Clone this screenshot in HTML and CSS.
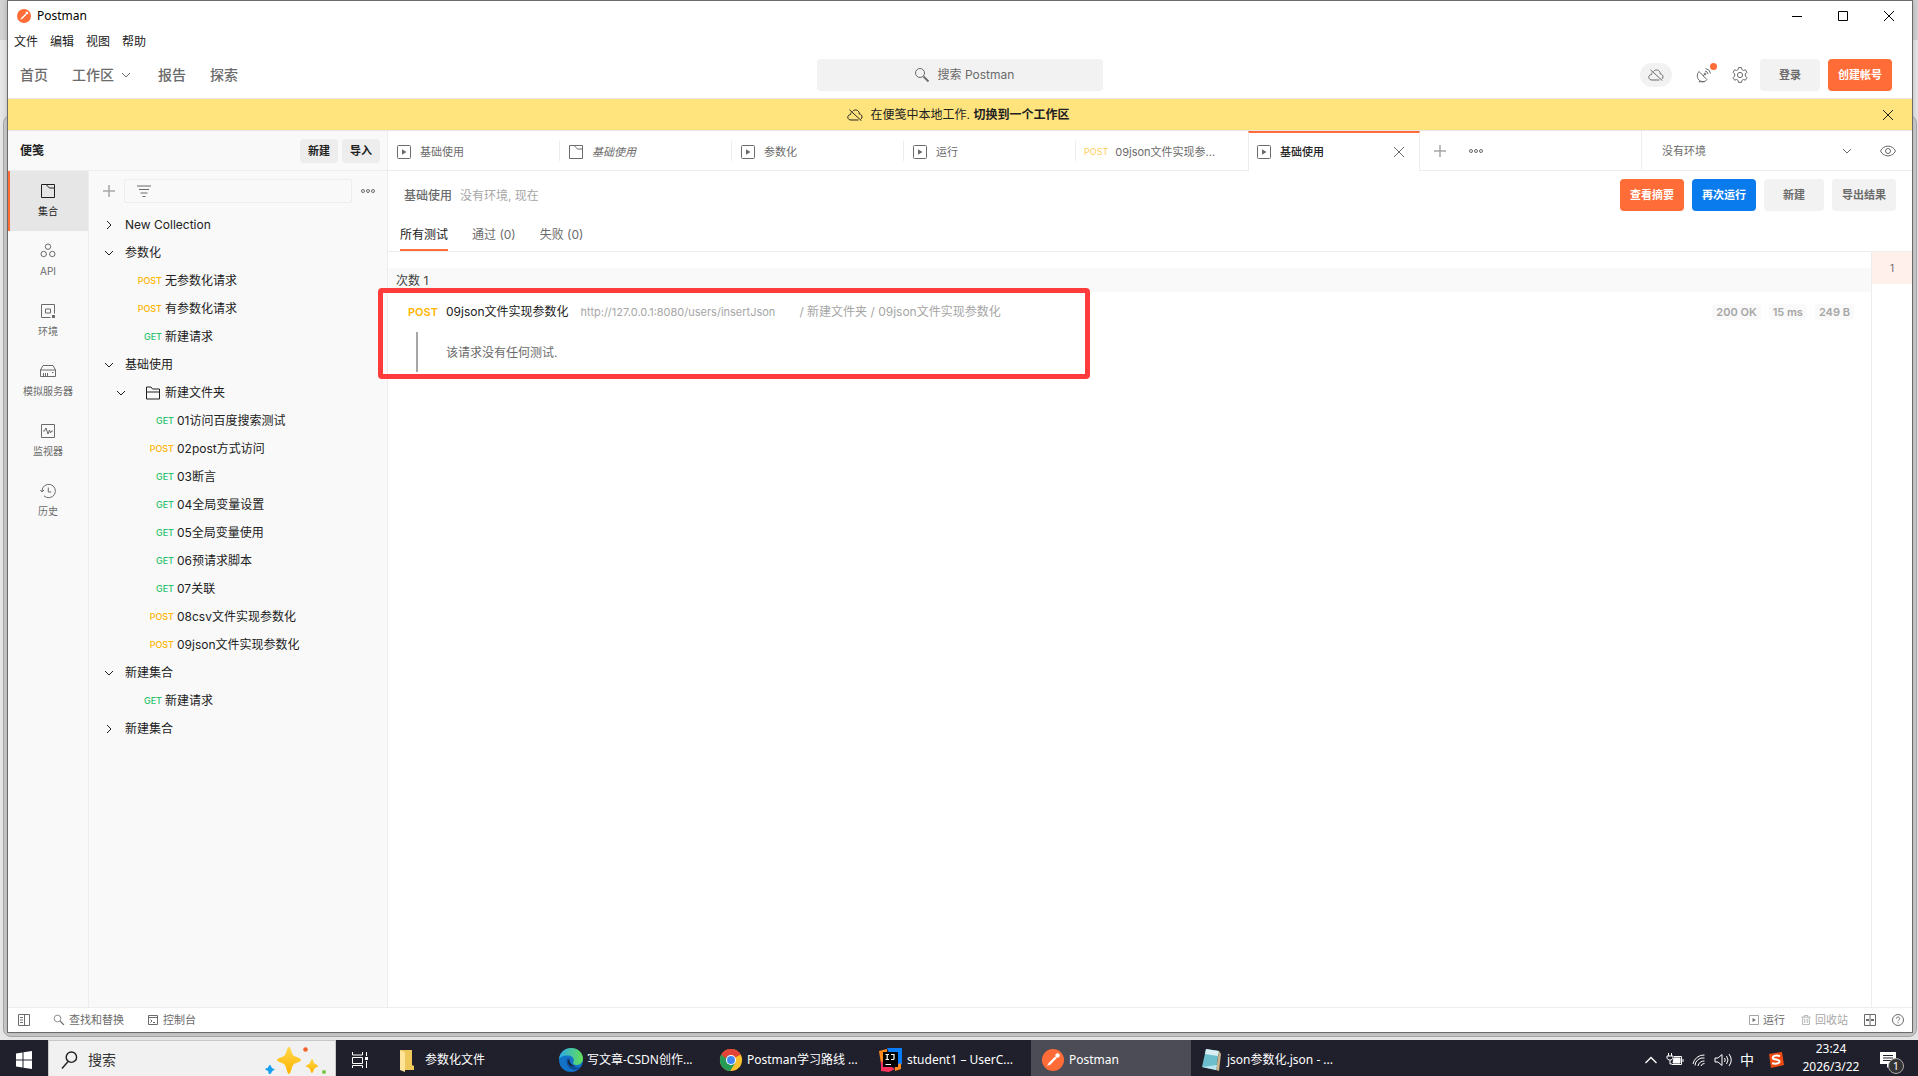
FILE: index.html
```html
<!DOCTYPE html>
<html lang="zh-CN">
<head>
<meta charset="utf-8">
<title>Postman</title>
<link rel="stylesheet" href="styles.css">
</head>
<body>
<svg class="sprite" aria-hidden="true">
  <symbol id="i-logo" viewBox="0 0 16 16"><circle cx="8" cy="8" r="8" fill="#ff6c37"/><path d="M3.600 12.400 5 10l4.600-4.600 1.200 1.200L6.200 11.200Z" fill="#fff"/><circle cx="11.300" cy="4.700" r="1.600" fill="#fff"/></symbol>
  <symbol id="i-down" viewBox="0 0 10 10"><path d="M1 3l4 4 4-4"/></symbol>
  <symbol id="i-right" viewBox="0 0 10 10"><path d="M3 1l4 4-4 4"/></symbol>
  <symbol id="i-search" viewBox="0 0 16 16"><circle cx="6" cy="6" r="4.500"/><path d="M9.500 9.500l5 5" stroke-width="1.800"/></symbol>
  <symbol id="i-close" viewBox="0 0 12 12"><path d="M1 1l10 10M11 1L1 11"/></symbol>
  <symbol id="i-plus" viewBox="0 0 12 12"><path d="M6 0v12M0 6h12" stroke-width="1.500"/></symbol>
  <symbol id="i-dots" viewBox="0 0 14 6"><circle cx="2" cy="3" r="1.500"/><circle cx="7" cy="3" r="1.500"/><circle cx="12" cy="3" r="1.500"/></symbol>
  <symbol id="i-cloud" viewBox="0 0 16 12"><path d="M5.500 2.500C6.500 1.200 8 .8 9.200 1c2 .4 3.100 1.900 3.100 4 1.700.2 2.700 1.300 2.700 2.900 0 1-.5 1.900-1.300 2.400M11.500 11H4C2.300 11 .8 10 .8 8.200.8 6.700 2 5.600 3.600 5.500c0-.7.2-1.400.5-2M2.500.8l12 11"/></symbol>
  <symbol id="i-run" viewBox="0 0 14 14"><rect x=".5" y=".5" width="13" height="13" rx="1"/><path d="M5 4.300v5.400L9.500 7z" fill="currentColor" stroke="none"/></symbol>
  <symbol id="i-coll" viewBox="0 0 14 14"><path d="M.5.500H5l3.500 3.500h5V13.500H.5zM5 .5h8.500V4"/></symbol>
  <symbol id="i-api" viewBox="0 0 16 16"><circle cx="8" cy="3.700" r="2.700"/><circle cx="3.700" cy="11" r="2.700"/><circle cx="12.300" cy="11" r="2.700"/></symbol>
  <symbol id="i-env" viewBox="0 0 16 16"><path d="M10.500 14.500h-9v-13h13v9M5.500 6h5v4h-5z"/><path d="M12 12h3v3h-3z" fill="currentColor" stroke="none"/></symbol>
  <symbol id="i-mock" viewBox="0 0 16 16"><path d="M.5 7l2.500-4.500h10L15.500 7v6.500H.5zM.5 7h15M3.500 10v3.500M5.500 10v3.500M7.500 10v3.500M12 9.500h1.500"/></symbol>
  <symbol id="i-mon" viewBox="0 0 16 16"><path d="M1.500 1.500h13v13h-13zM3 8h1.500L6 5l2 6 1.500-4 1 3 1-2H13"/></symbol>
  <symbol id="i-hist" viewBox="0 0 16 16"><path d="M2 8a6.700 6.700 0 1 1 2 4.800M.3 7L2 9l2-2M8.300 4.500V9h3"/></symbol>
  <symbol id="i-folder" viewBox="0 0 14 14"><path d="M.5 13V1H5l1.500 2h7v10zM.5 6h13"/></symbol>
  <symbol id="i-filter" viewBox="0 0 14 12"><path d="M0 1h14M2 4.500h10M3.500 8h7M5.500 11.500h3"/></symbol>
  <symbol id="i-dish" viewBox="0 0 16 16"><path d="M3 4.500c-2.500 3-2 6.500 0 8.500s6 2.300 8-.3zM7 9l2-2M2.700 14.800h6M9 4a3.500 3.500 0 0 1 3 3M9.500 1.500a6 6 0 0 1 5 5"/><circle cx="9" cy="7" r=".9"/></symbol>
  <symbol id="i-gear" viewBox="0 0 16 16"><circle cx="8" cy="8" r="2.600"/><path d="M6.500.6h3l.4 2 1.500.9 2-.7 1.500 2.600L13.300 7v2l1.600 1.600-1.500 2.600-2-.7-1.500.9-.4 2h-3l-.4-2-1.500-.9-2 .7-1.500-2.600L2.700 9V7L1.100 5.400l1.500-2.600 2 .7 1.500-.9z"/></symbol>
  <symbol id="i-eye" viewBox="0 0 16 12"><path d="M.5 6C3.500-.5 12.500-.5 15.500 6 12.500 12.500 3.500 12.500.5 6z"/><circle cx="8" cy="6" r="2.500"/></symbol>
  <symbol id="i-side" viewBox="0 0 12 12"><path d="M.5.500h11v11H.5zM6.500.500v11M2 3.500h3M2 6h3M2 8.500h3"/></symbol>
  <symbol id="i-cons" viewBox="0 0 12 12"><path d="M1.500 1.500h9v9h-9zM1.500 3.500h9M3.500 5.500L5 7 3.500 8.500M6 8.500h2"/></symbol>
  <symbol id="i-trash" viewBox="0 0 12 12"><path d="M.5 2.500h11M4 2.500v-2h4v2M2 2.500v9h8v-9M4.500 4.500v5M7.500 4.500v5"/></symbol>
  <symbol id="i-split" viewBox="0 0 12 12"><path d="M.5.500h11v11H.5zM6 .5v11"/><path d="M2 5h3v2H2zM7 5h3v2H7z" fill="currentColor" stroke="none"/></symbol>
  <symbol id="i-help" viewBox="0 0 12 12"><circle cx="6" cy="6" r="5.500"/><path d="M4.300 4.700c0-2.200 3.400-2.200 3.400 0C7.700 6 6 6 6 7.300M6 8.300v1"/></symbol>
</svg>

<div class="desktop">
  <div class="rear-window"></div>
  <div class="window">
    <div class="titlebar">
      <svg class="s14"><use href="#i-logo"/></svg>
      <span class="title">Postman</span>
      <div class="wincontrols">
        <button aria-label="最小化"><svg class="ico s12" viewBox="0 0 12 12"><path d="M1 6.500h10"/></svg></button>
        <button aria-label="最大化"><svg class="ico s12" viewBox="0 0 12 12"><path d="M1.500 1.500h9v9h-9z"/></svg></button>
        <button aria-label="关闭"><svg class="ico s12"><use href="#i-close"/></svg></button>
      </div>
    </div>
    <nav class="menubar"><button>文件</button><button>编辑</button><button>视图</button><button>帮助</button></nav>

    <header class="header">
      <nav class="nav">
        <a href="#">首页</a>
        <a href="#">工作区<svg class="ico s10"><use href="#i-down"/></svg></a>
        <a href="#">报告</a>
        <a href="#">探索</a>
      </nav>
      <button class="search"><svg class="ico s16"><use href="#i-search"/></svg>搜索 Postman</button>
      <div class="account">
        <button class="pill" aria-label="离线"><svg class="ico cloud"><use href="#i-cloud"/></svg></button>
        <button class="plain dish" aria-label="通知"><svg class="ico s16"><use href="#i-dish"/></svg><i class="dot"></i></button>
        <button class="plain gear" aria-label="设置"><svg class="ico s16"><use href="#i-gear"/></svg></button>
        <button class="btn">登录</button>
        <button class="btn orange">创建帐号</button>
      </div>
    </header>

    <div class="banner">
      <svg class="ico cloud"><use href="#i-cloud"/></svg>
      <span>在便笺中本地工作. <a href="#">切换到一个工作区</a></span>
      <button class="plain banner-close" aria-label="关闭提示"><svg class="ico s12"><use href="#i-close"/></svg></button>
    </div>

    <div class="body">
      <aside class="sidebar">
        <div class="side-head">
          <h2>便笺</h2>
          <button>新建</button><button>导入</button>
        </div>
        <div class="side-body">
          <nav class="rail">
            <a href="#" class="on"><svg class="ico s14"><use href="#i-coll"/></svg>集合</a>
            <a href="#"><svg class="ico s16"><use href="#i-api"/></svg>API</a>
            <a href="#"><svg class="ico s16"><use href="#i-env"/></svg>环境</a>
            <a href="#"><svg class="ico s16"><use href="#i-mock"/></svg>模拟服务器</a>
            <a href="#"><svg class="ico s16"><use href="#i-mon"/></svg>监视器</a>
            <a href="#"><svg class="ico s16"><use href="#i-hist"/></svg>历史</a>
          </nav>
          <div class="explorer">
            <div class="tools">
              <button class="plain gray" aria-label="新建集合"><svg class="ico s12"><use href="#i-plus"/></svg></button>
              <label class="filter"><svg class="ico s14"><use href="#i-filter"/></svg><input type="text" aria-label="筛选"></label>
              <button class="plain" aria-label="更多"><svg class="ico dots"><use href="#i-dots"/></svg></button>
            </div>
            <ul class="tree">
              <li class="group"><svg class="ico s10"><use href="#i-right"/></svg>New Collection</li>
              <li class="group"><svg class="ico s10"><use href="#i-down"/></svg>参数化</li>
              <li class="req"><b class="post">POST</b>无参数化请求</li>
              <li class="req"><b class="post">POST</b>有参数化请求</li>
              <li class="req"><b class="get">GET</b>新建请求</li>
              <li class="group"><svg class="ico s10"><use href="#i-down"/></svg>基础使用</li>
              <li class="folder"><svg class="ico s10"><use href="#i-down"/></svg><svg class="ico s14 folder-icon"><use href="#i-folder"/></svg>新建文件夹</li>
              <li class="req deep"><b class="get">GET</b>01访问百度搜索测试</li>
              <li class="req deep"><b class="post">POST</b>02post方式访问</li>
              <li class="req deep"><b class="get">GET</b>03断言</li>
              <li class="req deep"><b class="get">GET</b>04全局变量设置</li>
              <li class="req deep"><b class="get">GET</b>05全局变量使用</li>
              <li class="req deep"><b class="get">GET</b>06预请求脚本</li>
              <li class="req deep"><b class="get">GET</b>07关联</li>
              <li class="req deep"><b class="post">POST</b>08csv文件实现参数化</li>
              <li class="req deep"><b class="post">POST</b>09json文件实现参数化</li>
              <li class="group"><svg class="ico s10"><use href="#i-down"/></svg>新建集合</li>
              <li class="req"><b class="get">GET</b>新建请求</li>
              <li class="group"><svg class="ico s10"><use href="#i-right"/></svg>新建集合</li>
            </ul>
          </div>
        </div>
      </aside>

      <main class="main">
        <div class="tabbar">
          <button class="tab"><svg class="ico s14"><use href="#i-run"/></svg>基础使用</button>
          <button class="tab"><svg class="ico s14"><use href="#i-coll"/></svg><em>基础使用</em></button>
          <button class="tab"><svg class="ico s14"><use href="#i-run"/></svg>参数化</button>
          <button class="tab"><svg class="ico s14"><use href="#i-run"/></svg>运行</button>
          <button class="tab last"><b class="post">POST</b>09json文件实现参...</button>
          <button class="tab active"><svg class="ico s14"><use href="#i-run"/></svg>基础使用<svg class="ico s12 x"><use href="#i-close"/></svg></button>
          <div class="tab-tools">
            <button class="plain gray" aria-label="新标签页"><svg class="ico s12"><use href="#i-plus"/></svg></button>
            <button class="plain" aria-label="标签页选项"><svg class="ico dots"><use href="#i-dots"/></svg></button>
          </div>
          <div class="env">
            <select aria-label="环境"><option>没有环境</option></select>
            <svg class="ico s10"><use href="#i-down"/></svg>
            <button class="plain" aria-label="查看环境"><svg class="ico cloud"><use href="#i-eye"/></svg></button>
          </div>
        </div>

        <section class="run-head">
          <div class="run-title">
            <h1>基础使用</h1><span>没有环境, 现在</span>
            <div class="actions">
              <button class="btn orange">查看摘要</button>
              <button class="btn blue">再次运行</button>
              <button class="btn">新建</button>
              <button class="btn">导出结果</button>
            </div>
          </div>
          <div class="run-tabs">
            <button class="on">所有测试</button><button>通过 (0)</button><button>失败 (0)</button>
          </div>
        </section>

        <div class="results">
          <div class="list">
            <h3>次数 1</h3>
            <article class="result">
              <div class="marker"></div>
              <div class="line">
                <b class="post">POST</b>
                <a href="#" class="name">09json文件实现参数化</a>
                <span class="url">http://127.0.0.1:8080/users/insertJson</span>
                <span class="path">/ 新建文件夹 / 09json文件实现参数化</span>
                <div class="stats"><span>200 OK</span><span>15 ms</span><span>249 B</span></div>
              </div>
              <p>该请求没有任何测试.</p>
            </article>
          </div>
          <div class="iterations"><button>1</button></div>
        </div>
      </main>
    </div>

    <footer class="status">
      <button aria-label="侧栏"><svg class="ico s12"><use href="#i-side"/></svg></button>
      <button><svg class="ico s12"><use href="#i-search"/></svg>查找和替换</button>
      <button><svg class="ico s12"><use href="#i-cons"/></svg>控制台</button>
      <div class="status-right">
        <button><svg class="ico s10"><use href="#i-run"/></svg>运行</button>
        <button class="off"><svg class="ico s10"><use href="#i-trash"/></svg>回收站</button>
        <button aria-label="双栏"><svg class="ico s12"><use href="#i-split"/></svg></button>
        <button aria-label="帮助"><svg class="ico s12"><use href="#i-help"/></svg></button>
      </div>
    </footer>
  </div>
</div>

<div class="taskbar">
  <button class="start" aria-label="开始"><svg width="16" height="18" viewBox="0 0 16 18"><path d="M0 2.500l6.500-1v7H0zM7.500 1.300L16 0v8.500H7.500zM0 9.500h6.500v7L0 15.500zM7.500 9.500H16V18l-8.500-1.300z" fill="#fff"/></svg></button>
  <label class="task-search">
    <svg class="ico lens" viewBox="0 0 18 20"><circle cx="11" cy="7" r="5.500" stroke-width="1.500"/><path d="M7.500 11.500L1 19" stroke-width="1.500"/></svg>
    <input type="text" placeholder="搜索" aria-label="搜索">
    <svg class="sparkle" viewBox="0 0 62 28">
      <defs><linearGradient id="gold" x2="0" y2="1"><stop stop-color="#ffd84a"/><stop offset="1" stop-color="#ffb300"/></linearGradient></defs>
      <path d="M24 1c2 0 2.500 7 4.500 8.500S36 12 36 14s-5.500 2.500-7.500 4.500S26 28 24 28s-2.500-7.500-4.500-9.500S12 16 12 14s5.500-2.500 7.500-4.500S22 1 24 1z" fill="url(#gold)"/>
      <path d="M47 13c1.200 0 1.500 3.700 2.500 4.500s3.500 1.300 3.500 2.500-2.500 1.500-3.500 2.500S48.200 27 47 27s-1.500-3.500-2.500-4.500S41 21.200 41 20s2.500-1.500 3.500-2.500S45.800 13 47 13z" fill="url(#gold)"/>
      <path d="M5 19c1 0 1 2 2 3s3 .5 2.500 1.500-2 1-2.500 2S6 28 4.500 28 4 26 3 25s-3-.5-2.500-2 2-.5 2.500-1.500S4 19 5 19z" fill="#18a0f0"/>
      <circle cx="40.500" cy="3.500" r="2.300" fill="#f4622c"/><circle cx="59" cy="26" r="2" fill="#7cc742"/>
    </svg>
  </label>
  <button class="taskview" aria-label="任务视图"><svg width="18" height="18" viewBox="0 0 18 18" fill="none" stroke="#fff"><path d="M1.500 1v3h10V1M1.500 6.500h10v6h-10zM1.500 17v-2.500h10V17M15.500 1v4M15.500 10v7"/><path d="M14 6h3v3h-3z" fill="#fff" stroke="none"/></svg></button>
  <button class="task explorer-task"><svg width="16" height="24" viewBox="0 0 16 24"><path d="M1 2h12v15l2 1v4H4z" fill="#f0c75a"/><path d="M1 2l5 2.500V24l-5-2z" fill="#ffe49a"/></svg>参数化文件</button>
  <button class="task"><svg width="24" height="24" viewBox="0 0 24 24">
    <defs><linearGradient id="edgeTop"><stop stop-color="#2aa9ea"/><stop offset="1" stop-color="#63df55"/></linearGradient></defs>
    <circle cx="12" cy="12" r="12" fill="#1272c8"/><path d="M0 11C1 4 6 0 12 0c7 0 12 5 12 10.500 0 4-3 6.500-6.500 6.500-2.500 0-4-1-3.500-2.200C16 12 14 8 9.500 7.500 5 7 1.500 9 0 11z" fill="url(#edgeTop)"/><path d="M9 10c-3 3-1 10 5 11.500 3 .7 6-.5 8-2.500-2 1-10 1.500-11-6z" fill="#0c4c98"/><path d="M11 10.500c-2 2 0 6.500 5.500 7.500-2 .8-7 0-7.500-4 0-1.500 1-3 2-3.500z" fill="#20202c"/></svg>写文章-CSDN创作...</button>
  <button class="task"><svg width="24" height="24" viewBox="-1 -1 26 26"><circle cx="12" cy="12" r="12" fill="#fbc02d"/><path d="M12 12L1.600 6A12 12 0 0 1 22.400 6z" fill="#e2443a"/><path d="M1.600 6A12 12 0 0 0 11 24l6-9.500H7z" fill="#269b55"/><path d="M1.600 6l5.200 9L12 6z" fill="#269b55"/><path d="M1.600 6A12 12 0 0 1 22.400 6.500H12a6 6 0 0 0-5.700 4z" fill="#e2443a"/><circle cx="12" cy="12" r="5.500" fill="#fff"/><circle cx="12" cy="12" r="4.300" fill="#4285f4"/></svg>Postman学习路线 ...</button>
  <button class="task"><svg width="24" height="24" viewBox="0 0 24 24"><path d="M0 3l8-2v10L2 16z" fill="#ff8a1f"/><path d="M8 0h15v16l-6 4z" fill="#087cfa"/><path d="M2 13l14 8-6 3-8-1z" fill="#fe315d"/><path d="M16 18l6-3v6l-6 2z" fill="#ff8a1f"/><path d="M4 4h15v15H4z"/><path d="M6.500 6.500H10M8.200 6.500v5M6.500 11.500H10M12 6.500h3v4q0 1-1 1h-2M6.500 16.500H12" fill="none" stroke="#fff" stroke-width="1.200"/></svg>student1 – UserC...</button>
  <button class="task current"><svg width="22" height="22"><use href="#i-logo"/></svg>Postman</button>
  <button class="task"><svg width="24" height="24" viewBox="0 0 24 24"><path d="M7 1l13 2-3 19-14-3z" fill="#6dbecd"/><path d="M7 1l13 2-1 5L6 6z" fill="#d9eef2"/><path d="M20 3l2 3-2 17-3-1z" fill="#c8b48c"/><path d="M3 19l14 3 1-5z" fill="#b9e6ee"/></svg>json参数化.json - ...</button>
  <div class="tray">
    <svg class="ico" width="14" height="10" viewBox="0 0 14 10"><path d="M1.500 8L7 2.500 12.500 8" stroke-width="1.300"/></svg>
    <svg class="ico" width="18" height="16" viewBox="0 0 18 16"><path d="M2.500 1v3M5.500 1v3M1 4h6v2.500L5 8H3L1 6.500zM4 8v4h2"/><path d="M8 4.500h7.500v8H6M17 7v3"/><path d="M8 6h6v5H7z" fill="#fff"/></svg>
    <svg class="ico" width="14" height="14" viewBox="0 0 14 14"><path d="M1 11A11 11 0 0 1 12.500 2M3 12.500A8 8 0 0 1 12.500 5M6 13a6 6 0 0 1 6.500-5M9 13a3.500 3.500 0 0 1 3.500-2.500"/></svg>
    <svg class="ico" width="18" height="14" viewBox="0 0 18 14"><path d="M1 5h3l4-3.500v11L4 9H1zM10.500 5q1.500 2 0 4M12.500 3q3 4 0 8M15 1q4.500 6 0 12"/></svg>
    <span class="ime">中</span>
    <svg width="16" height="16" viewBox="0 0 16 16"><path d="M1 2l13-2 2 13-13 3z" fill="#f04a12"/><path d="M12 4C7 3 4.500 4 4.800 6s7 1.200 6.800 3.500S7 12 4 11.300" fill="none" stroke="#fff" stroke-width="2"/></svg>
    <time>23:24<br>2026/3/22</time>
    <button class="notice" aria-label="通知中心"><svg width="16" height="18" viewBox="0 0 16 18"><path d="M0 1h16v12h-5l-4 4v-4H0z" fill="#fff"/><path d="M3 4.500h10M3 7h10M3 9.500h10" stroke="#20202c"/></svg><i>1</i></button>
  </div>
</div>
</body>
</html>
```
FILE: styles.css
```css
* { box-sizing: border-box; }
body {
  margin: 0;
  height: 100vh;
  display: flex;
  flex-direction: column;
  overflow: hidden;
  font: 12px/16px Inter, "Noto Sans CJK SC", sans-serif;
  color: #212121;
}
button, input, select { font: inherit; color: inherit; border: 0; background: none; padding: 0; margin: 0; }
a { color: inherit; text-decoration: none; }
h1, h2, h3, p, ul { margin: 0; padding: 0; font-size: 12px; }
ul { list-style: none; }
svg { flex: none; display: block; }
.sprite { position: absolute; width: 0; height: 0; }
.ico { fill: none; stroke: currentColor; }
.s10 { width: 10px; height: 10px; }
.s12 { width: 12px; height: 12px; }
.s14 { width: 14px; height: 14px; }
.s16 { width: 16px; height: 16px; }
.cloud { width: 16px; height: 12px; }
.dots { width: 14px; height: 6px; }
.plain { display: flex; align-items: center; justify-content: center; color: #6b6b6b; }
.gray { color: #a6a6a6; }
.post { color: #ffb400; }
.get { color: #2bc46e; }

/* Desktop and window frame */
.desktop {
  position: relative;
  flex: 1;
  min-height: 0;
  padding: 0 5px 7px 7px;
  background: linear-gradient(#d2d2d2 40px, #e6e6e6 40px);
}
.rear-window {
  position: absolute;
  inset: 115px 1px 3px 3px;
  border: 1px solid #a8a8a8;
  border-radius: 8px;
  background: #cfcfcf;
}
.window {
  position: relative;
  height: 100%;
  display: flex;
  flex-direction: column;
  background: #fff;
  border: 1px solid #6b6b6b;
  box-shadow: 0 0 6px rgba(0, 0, 0, .2);
}
.titlebar {
  display: flex;
  align-items: center;
  gap: 6px;
  height: 29px;
  padding-left: 9px;
  font-family: "Noto Sans", "Noto Sans CJK SC", sans-serif;
  color: #000;
}
.wincontrols { margin-left: auto; display: flex; }
.wincontrols button { width: 46px; height: 28px; display: flex; align-items: center; justify-content: center; color: #000; }
.menubar { display: flex; gap: 12px; height: 22px; align-items: center; padding: 2px 0 0 6px; }

/* Header */
.header {
  display: grid;
  grid-template-columns: 1fr 286px 1fr;
  align-items: center;
  height: 47px;
  padding: 0 20px;
  border-bottom: 1px solid #e6e6e6;
}
.nav { display: flex; gap: 24px; margin-left: -8px; font-size: 14px; font-weight: 500; color: #6b6b6b; }
.nav a { display: flex; align-items: center; gap: 7px; }
.nav a:nth-child(2) { margin-right: 3px; }
.search {
  display: flex;
  align-items: center;
  justify-content: center;
  gap: 8px;
  height: 32px;
  padding-left: 8px;
  border-radius: 4px;
  background: #f2f2f2;
  color: #6b6b6b;
}
.account { display: flex; justify-content: flex-end; align-items: center; }
.pill { width: 32px; height: 24px; margin-right: 24px; border-radius: 12px; background: #f2f2f2; color: #6b6b6b; display: flex; align-items: center; justify-content: center; }
.dish { position: relative; }
.dot { position: absolute; top: -4px; right: -5px; width: 7px; height: 7px; border-radius: 50%; background: #ff6c37; }
.gear { margin: 0 12px 0 20px; }
.btn {
  min-width: 60px;
  height: 32px;
  padding: 0 10px;
  border-radius: 4px;
  background: #f2f2f2;
  color: #6b6b6b;
  font-size: 11px;
  font-weight: 600;
}
.btn + .btn { margin-left: 8px; }
.btn.orange { background: #ff6c37; color: #fff; }
.btn.blue { background: #097bed; color: #fff; }
.banner {
  position: relative;
  display: flex;
  align-items: center;
  justify-content: center;
  gap: 8px;
  height: 32px;
  padding-right: 4px;
  background: #ffe47e;
  border-bottom: 1px solid #e6e6e6;
}
.banner a { font-weight: 600; }
.banner-close { position: absolute; right: 18px; top: 10px; color: #212121; }

/* Sidebar */
.body { flex: 1; min-height: 0; display: flex; }
.sidebar { width: 380px; flex: none; display: flex; flex-direction: column; background: #f9f9f9; border-right: 1px solid #ededed; }
.side-head { display: flex; align-items: center; gap: 4px; height: 40px; padding: 0 7px 0 12px; border-bottom: 1px solid #ededed; }
.side-head h2 { margin-right: auto; font-weight: 600; }
.side-head button { width: 38px; height: 24px; border-radius: 4px; background: #ededed; font-size: 11px; font-weight: 600; }
.side-body { flex: 1; display: flex; min-height: 0; }
.rail { width: 81px; border-right: 1px solid #ededed; color: #6b6b6b; }
.rail a { display: flex; flex-direction: column; align-items: center; justify-content: space-between; height: 60px; padding: 12px 0; font-size: 10px; }
.rail .on { padding-top: 13px; padding-right: 2px; background: #e6e6e6; border-left: 2px solid #ff6c37; color: #212121; }
.explorer { flex: 1; }
.tools { display: flex; align-items: center; gap: 9px; height: 40px; padding: 0 12px 0 14px; }
.filter { flex: 1; display: flex; align-items: center; height: 24px; padding-left: 12px; border: 1px solid #ededed; border-radius: 2px; color: #6b6b6b; }
.filter input { flex: 1; min-width: 0; }
.tree li { display: flex; align-items: center; height: 28px; }
.tree .group { padding-left: 15px; gap: 11px; }
.tree .folder { padding-left: 27px; gap: 5px; }
.folder-icon { margin-left: 15px; }
.req { padding-left: 40px; }
.req.deep { padding-left: 52px; }
.req b { width: 33px; margin-right: 3px; text-align: right; font-size: 9px; font-weight: 500; }

/* Tabs */
.main { flex: 1; min-width: 0; display: flex; flex-direction: column; }
.tabbar { display: flex; height: 40px; }
.tab {
  position: relative;
  width: 172px;
  display: flex;
  align-items: center;
  gap: 9px;
  padding: 2px 9px 0;
  border-bottom: 1px solid #ededed;
  color: #6b6b6b;
  font-size: 11px;
}
.tab::after { content: ""; position: absolute; right: 0; top: 10px; width: 1px; height: 20px; background: #ededed; }
.tab .post { font-size: 9px; font-weight: 400; opacity: .65; }
.tab.last { gap: 7px; padding-left: 8px; }
.tab.last::after, .tab.active::after { display: none; }
.tab.active { border: solid #ededed; border-width: 2px 1px 0; border-top-color: #ff6c37; padding: 0 14px 0 8px; color: #212121; font-weight: 500; }
.tab .ico { color: #6b6b6b; }
.tab .x { margin-left: auto; }
.tab-tools { flex: 1; display: flex; align-items: center; gap: 23px; padding-left: 14px; border-bottom: 1px solid #ededed; }
.env { width: 271px; display: flex; align-items: center; gap: 28px; padding: 0 16px 0 20px; border: solid #ededed; border-width: 0 0 1px 1px; color: #6b6b6b; font-size: 11px; }
.env select { flex: 1; appearance: none; }

/* Run results */
.run-head { padding: 8px 16px 0 9px; border-bottom: 1px solid #ededed; }
.run-title { display: flex; align-items: center; gap: 8px; padding-left: 7px; color: #a6a6a6; }
.run-title h1, .run-title span { padding-top: 2px; }
.run-title h1 { font-weight: 500; color: #6b6b6b; }
.actions { display: flex; margin-left: auto; }
.run-tabs { display: flex; gap: 24px; margin-top: 8px; padding-left: 3px; color: #6b6b6b; }
.run-tabs button { height: 32px; padding-top: 2px; border-bottom: 2px solid transparent; }
.run-tabs .on { border-color: #ff6c37; color: #212121; }
.results { flex: 1; display: flex; }
.list { flex: 1; padding-top: 16px; }
.list h3 { height: 24px; padding-left: 8px; line-height: 26px; font-weight: 400; background: #f9f9f9; color: #404040; }
.result { position: relative; padding: 12px 17px 0 20px; }
.marker { position: absolute; left: -10px; top: -4px; width: 712px; height: 91px; border: 5px solid #ff3b3b; border-radius: 4px; }
.line { display: flex; align-items: center; height: 16px; }
.line .post { width: 38px; font-size: 11px; font-weight: 600; }
.name { margin-right: 12px; }
.url { margin-right: 24px; font-size: 11px; color: #a6a6a6; }
.path { color: #a6a6a6; }
.stats { margin-left: auto; display: flex; gap: 8px; font-size: 11px; font-weight: 600; color: #a6a6a6; }
.stats span { padding: 0 4px; border-radius: 4px; background: #f9f9f9; }
.result p { height: 40px; margin: 12px 0 0 8px; padding-left: 28px; border-left: 2px solid #a6a6a6; line-height: 42px; color: #6b6b6b; }
.iterations { width: 41px; border-left: 1px solid #ededed; }
.iterations button { width: 100%; height: 32px; background: #fff0ec; color: #6b6b6b; font-size: 10px; }

/* Status bar */
.status { display: flex; align-items: center; height: 25px; padding: 0 8px 0 10px; border-top: 1px solid #ededed; color: #6b6b6b; font-size: 11px; }
.status button { display: flex; align-items: center; gap: 4px; }
.status > button + button { margin-left: 23px; }
.status-right { margin-left: auto; display: flex; gap: 16px; }
.status .off { color: #a6a6a6; }

/* Taskbar */
.taskbar {
  display: flex;
  align-items: flex-start;
  height: 36px;
  overflow: hidden;
  background: #20202c;
  color: #fff;
  font-family: "Noto Sans", "Noto Sans CJK SC", sans-serif;
}
.taskbar > * { height: 40px; display: flex; align-items: center; }
.start { width: 48px; justify-content: center; }
.task-search { width: 288px; padding: 0 8px 0 12px; border: 1px solid #c8c8c8; background: #f1f1f1; color: #212121; font-size: 14px; }
.lens { width: 17px; height: 20px; }
.task-search input { flex: 1; min-width: 0; margin-left: 10px; }
.task-search input::placeholder { color: #333; opacity: 1; }
.sparkle { width: 62px; height: 28px; }
.taskview { width: 55px; padding-left: 15px; }
.task { width: 160px; gap: 4px; padding-left: 8px; white-space: nowrap; }
.task.current { gap: 5px; padding-left: 11px; background: #4c4c56; }
.explorer-task { gap: 10px; }
.tray { margin-left: auto; gap: 8px; padding-right: 22px; }
.ime { font-size: 14px; margin: 0 6px 0 0; }
.tray time { width: 78px; height: 36px; align-self: flex-start; text-align: center; line-height: 18px; }
.notice { position: relative; margin-left: 2px; }
.notice i { position: absolute; left: 8px; top: 7px; width: 16px; height: 16px; border: 1px solid #aaa; border-radius: 50%; background: #333; font-size: 11px; line-height: 14px; font-style: normal; text-align: center; }
```
